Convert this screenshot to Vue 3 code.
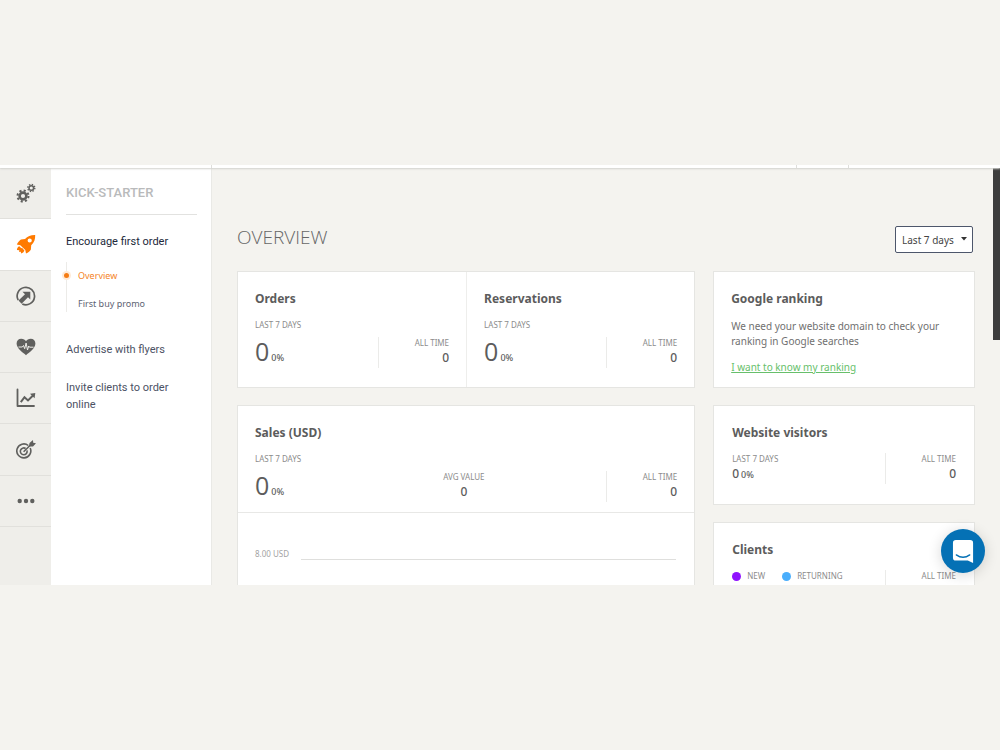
<script setup>
import { ref } from 'vue'

const range = ref('Last 7 days')
const split = [{ title: 'Orders' }, { title: 'Reservations' }]
</script>

<template>
  <div class="page">
    <div class="window">
      <header class="topbar"><i></i><i></i><i></i></header>
      <div class="body">
        <nav class="rail" aria-label="Sections">
          <button type="button" aria-label="Settings">
            <svg viewBox="0 0 20 20">
              <g fill="none" stroke="currentColor">
                <circle cx="7" cy="13" r="3.400" stroke-width="2.600" />
                <circle cx="7" cy="13" r="5.500" stroke-width="2" stroke-dasharray="2.1 2.22" />
                <circle cx="15.300" cy="5" r="2.300" stroke-width="1.500" />
                <circle cx="15.300" cy="5" r="3.500" stroke-width="1.400" stroke-dasharray="1.4 1.35" />
              </g>
            </svg>
          </button>
          <button type="button" class="active" aria-label="Kick-starter">
            <svg viewBox="0 0 20 20">
              <path fill="currentColor" fill-rule="evenodd" d="M19.2 1 C15 .9 11.6 2 9 5 L5 5.4 C3.900 5.700 1.600 8.600 .8 10.600 L4.300 11.200 L9.300 16.100 L10 19.500 C12.100 18.600 14.400 16.700 14.900 15.400 L15.200 11.300 C18.300 8.500 19.300 5.200 19.200 1 Z M13.700 4.400 a2.100 2.100 0 1 1 0 4.200 a2.100 2.100 0 0 1 0 -4.200 Z" />
              <path fill="currentColor" d="M3.300 12.300 L5.300 14.300 L6.100 13.700 L6.600 14.600 L8.400 16.500 C7.900 18 6.700 19.200 5 19.400 L4.900 17.700 L3.200 18.100 L3.300 16.200 L.9 16 C1 14.300 1.800 12.800 3.300 12.300 Z" />
            </svg>
          </button>
          <button type="button" aria-label="Promotions">
            <svg viewBox="0 0 20 20">
              <path fill="none" stroke="currentColor" stroke-width="1.700" d="M2.200 14.200 A8.700 8.700 0 1 1 6.300 18" />
              <path fill="currentColor" d="M6.500 5.800 H14.300 V13.500 L12 11.300 L5.600 17.700 L2.500 14.600 L9 8.200 Z" />
            </svg>
          </button>
          <button type="button" aria-label="Health">
            <svg viewBox="0 0 20 20">
              <path fill="currentColor" d="M10 18.200 C7 15.700 .6 11.700 .6 6.600 C.6 3.500 2.700 1.700 5.200 1.700 C7.500 1.700 9.100 2.800 10 4.300 C10.900 2.800 12.500 1.700 14.800 1.700 C17.300 1.700 19.400 3.500 19.400 6.600 C19.400 11.700 13 15.700 10 18.200 Z" />
              <path fill="none" stroke="#efeeea" stroke-width="1" d="M2.500 10 H6.300 L7.500 8.500 L8.700 11.700 L10.100 6 L11.500 13 L12.700 9 L13.500 10.200 H17.500" />
            </svg>
          </button>
          <button type="button" aria-label="Reports">
            <svg viewBox="0 0 20 20">
              <path fill="none" stroke="currentColor" stroke-width="1.800" stroke-linecap="round" stroke-linejoin="round" d="M1.500 1.500 V18 H18" />
              <path fill="none" stroke="currentColor" stroke-width="2" d="M4.800 14.200 L8.500 9.200 L12 12.400 L17 7.500" />
              <path fill="currentColor" d="M14 5.700 L19.300 5 L18.600 10.300 Z" />
            </svg>
          </button>
          <button type="button" aria-label="Targets">
            <svg viewBox="0 0 20 20">
              <g fill="none" stroke="currentColor" stroke-width="1.600">
                <path d="M12.300 5.500 A7 7 0 1 0 14.200 8" />
                <path d="M9.600 8.500 A3.400 3.400 0 1 0 11 10.400" />
                <path d="M7.600 11.800 L15 4.500" />
              </g>
              <path fill="currentColor" d="M13 6.400 L13.500 3 L17 0 L17.200 2.700 L20 3.200 L17 6.500 Z" />
            </svg>
          </button>
          <button type="button" aria-label="More">
            <svg viewBox="0 0 20 20" fill="currentColor">
              <circle cx="3.700" cy="10" r="2.200" /><circle cx="10" cy="10" r="2.200" /><circle cx="16.300" cy="10" r="2.200" />
            </svg>
          </button>
        </nav>

        <aside class="side">
          <h2>KICK-STARTER</h2>
          <a href="#first" class="current">Encourage first order</a>
          <div class="sub">
            <a href="#overview" class="on">Overview</a>
            <a href="#promo">First buy promo</a>
          </div>
          <a href="#flyers">Advertise with flyers</a>
          <a href="#invite">Invite clients to order online</a>
        </aside>

        <main>
          <div class="head">
            <h1>OVERVIEW</h1>
            <div class="picker">
              <select v-model="range" aria-label="Period">
                <option>Last 7 days</option>
                <option>Last 30 days</option>
              </select>
              <svg viewBox="0 0 6 4"><path d="M0 0 H6 L3 3.500 Z" /></svg>
            </div>
          </div>

          <div class="columns">
            <div class="col">
              <section class="card pair">
                <div v-for="s in split" :key="s.title" class="pane">
                  <h3>{{ s.title }}</h3>
                  <p class="label">LAST 7 DAYS</p>
                  <div class="figures">
                    <p class="big"><span>0</span><small>0%</small></p>
                    <div class="total"><p class="label">ALL TIME</p><b>0</b></div>
                  </div>
                </div>
              </section>

              <section class="card sales">
                <div class="pane">
                  <h3>Sales (USD)</h3>
                  <p class="label">LAST 7 DAYS</p>
                  <div class="figures">
                    <p class="big"><span>0</span><small>0%</small></p>
                    <div class="avg"><p class="label">AVG VALUE</p><b>0</b></div>
                    <div class="total"><p class="label">ALL TIME</p><b>0</b></div>
                  </div>
                </div>
                <div class="chart"><span>8.00 USD</span><i></i></div>
              </section>
            </div>

            <div class="col">
              <section class="card pane google">
                <h3>Google ranking</h3>
                <p>We need your website domain to check your ranking in Google searches</p>
                <a href="#ranking">I want to know my ranking</a>
              </section>

              <section class="card pane visitors">
                <h3>Website visitors</h3>
                <div class="row">
                  <div><p class="label">LAST 7 DAYS</p><p class="mid"><span>0</span><small>0%</small></p></div>
                  <div class="total"><p class="label">ALL TIME</p><b>0</b></div>
                </div>
              </section>

              <section class="card pane clients">
                <h3>Clients</h3>
                <div class="row">
                  <div class="legend label"><span class="new">NEW</span><span class="returning">RETURNING</span></div>
                  <div class="total"><p class="label">ALL TIME</p></div>
                </div>
              </section>
            </div>
          </div>
        </main>
        <div class="scroll"></div>
      </div>
      <button type="button" class="chat" aria-label="Open chat">
        <svg viewBox="0 0 24 26">
          <path fill="#fff" d="M4 1 H19 Q22 1 22 4 V25 L16.500 22.500 H4 Q1 22.500 1 19.500 V4 Q1 1 4 1 Z" />
          <path fill="none" stroke="#0571b5" stroke-width="1.400" stroke-linecap="round" d="M4.500 16.500 Q11.500 21.500 18.500 16.500" />
        </svg>
      </button>
    </div>
  </div>
</template>

<style>
body { background: #f4f3ef; }
</style>

<style scoped>
* { box-sizing: border-box; }
h1, h2, h3, p { margin: 0; }
button { font: inherit; cursor: pointer; }
.page {
  min-height: 100vh;
  padding-top: 165px;
  background: #f4f3ef;
  color: #5c5c5c;
  font-family: "Noto Sans", "Open Sans", sans-serif;
  font-size: 10px;
}
.window { position: relative; display: flex; flex-direction: column; height: 56vh; overflow: hidden; }
.topbar {
  position: relative;
  flex: none;
  display: flex;
  height: 3px;
  background: #fff;
  box-shadow: 0 1px 2px #d2d2ce;
}
.topbar i { width: 1px; background: #dededb; }
.topbar i:nth-child(1) { margin-left: 211px; }
.topbar i:nth-child(2) { margin-left: auto; }
.topbar i:nth-child(3) { margin: 0 151px 0 51px; }
.body { flex: 1; display: flex; min-height: 0; }

.rail {
  flex: none;
  display: flex;
  flex-direction: column;
  width: 51px;
  padding-bottom: 58px;
  background: #efeeea;
}
.rail button {
  flex: 1;
  display: grid;
  place-items: center;
  padding: 0;
  border: 0;
  border-bottom: 1px solid #e1e0dc;
  background: none;
  color: #60605e;
}
.rail .active { background: #fff; color: #ff7a00; }
.rail svg { width: 20px; height: 20px; }

.side {
  flex: none;
  width: 161px;
  padding: 16px 14px 0 15px;
  border-right: 1px solid #e9e9e6;
  background: #fff;
  font-family: Roboto, sans-serif;
}
.side h2 {
  padding-bottom: 13px;
  margin-bottom: 18px;
  border-bottom: 1px solid #e2e2e0;
  color: #b9babb;
  font-size: 13px;
  font-weight: 500;
  line-height: 17px;
}
.side > a {
  display: block;
  margin-bottom: 21px;
  color: #4c5264;
  font-size: 11px;
  line-height: 17px;
  text-decoration: none;
}
.side > a.current { margin-bottom: 12px; color: #22283a; }
.sub {
  display: flex;
  flex-direction: column;
  gap: 11px;
  margin-bottom: 29px;
  padding: 5px 0 0 11px;
  border-left: 1px solid #ecebe8;
}
.sub a {
  position: relative;
  color: #5d6372;
  font-family: "Noto Sans", sans-serif;
  font-size: 9px;
  line-height: 17px;
  text-decoration: none;
}
.sub .on { color: #f5841f; }
.sub .on::before {
  content: "";
  position: absolute;
  left: -14px;
  top: 6px;
  width: 5px;
  height: 5px;
  border-radius: 50%;
  background: #f57c14;
  box-shadow: 0 0 0 2px #ffead6;
}

main { flex: 1; min-width: 0; padding: 58px 18px 0 25px; }
.head { display: flex; align-items: flex-start; justify-content: space-between; }
.head h1 { color: #666; font-family: "Open Sans", sans-serif; font-size: 19px; font-weight: 300; line-height: 22px; }
.picker { position: relative; margin-right: 2px; }
.picker select {
  appearance: none;
  display: block;
  width: 78px;
  height: 27px;
  padding: 0 6px;
  border: 1px solid #4d566b;
  border-radius: 2px;
  background: #fff;
  color: #444;
  font-family: inherit;
  font-size: 10px;
}
.picker svg { position: absolute; right: 6px; top: 11px; width: 6px; height: 4px; fill: #333; pointer-events: none; }

.columns { display: grid; grid-template-columns: 7fr 4fr; gap: 18px; margin-top: 18px; }
.col { display: flex; flex-direction: column; gap: 17px; min-width: 0; }
.card { border: 1px solid #e5e5e2; background: #fff; }
.pane { padding: 18px 17px 0; }
.pair { display: grid; grid-template-columns: 1fr 1fr; height: 117px; }
.pair .pane + .pane { border-left: 1px solid #eeeeec; }
h3 { font-size: 12px; font-weight: 700; line-height: 18px; color: #5c5c5c; }
.label { color: #8c8c8c; font-size: 8px; line-height: 12px; }
h3 + .label { margin-top: 11px; }
.figures { display: grid; grid-template-columns: 1fr 1fr; margin-top: 6px; }
.sales .figures { grid-template-columns: 31fr 31fr 32fr; }
.big, .mid { display: flex; align-items: baseline; gap: 2px; }
.big span { font-family: "Open Sans", sans-serif; font-size: 25px; font-weight: 400; line-height: 28px; }
.big small, .mid small { font-size: 9px; font-weight: 500; }
.mid { font-size: 12px; font-weight: 500; line-height: 18px; }
b { display: block; font-size: 12px; font-weight: 500; line-height: 18px; }
.total { justify-self: end; width: 71px; height: 31px; border-left: 1px solid #ebebe9; text-align: right; }
.avg { text-align: center; }
.sales { height: 220px; }
.sales .pane { height: 107px; border-bottom: 1px solid #e8e8e6; }
.chart { display: flex; align-items: flex-end; gap: 12px; padding: 34px 18px 0 17px; color: #a3a3a3; font-size: 8px; line-height: 14px; }
.chart i { flex: 1; margin-bottom: 1px; border-bottom: 1px solid #dfdfdd; }

.google { height: 117px; }
.google p { margin: 11px 0; color: #707070; line-height: 15px; }
.google a { color: #67bf6b; line-height: 15px; }
.visitors { height: 100px; }
.clients { height: 118px; }
.visitors, .clients { padding-left: 18px; padding-right: 18px; }
.row { display: flex; justify-content: space-between; margin-top: 11px; }
.legend { display: flex; gap: 17px; }
.legend span { display: flex; align-items: center; gap: 6px; height: 12px; }
.legend span::before { content: ""; width: 9px; height: 9px; border-radius: 50%; background: #9013fe; }
.legend .returning::before { background: #4aaefc; }

.scroll { flex: none; width: 7px; height: 172px; background: #3d3d3d; }
.chat {
  position: absolute;
  right: 15px;
  bottom: 12px;
  display: grid;
  place-items: center;
  width: 44px;
  height: 44px;
  padding: 0;
  border: 0;
  border-radius: 50%;
  background: #0571b5;
  box-shadow: 0 2px 14px rgba(0, 0, 0, 0.16);
}
.chat svg { width: 23px; height: 25px; }
</style>
